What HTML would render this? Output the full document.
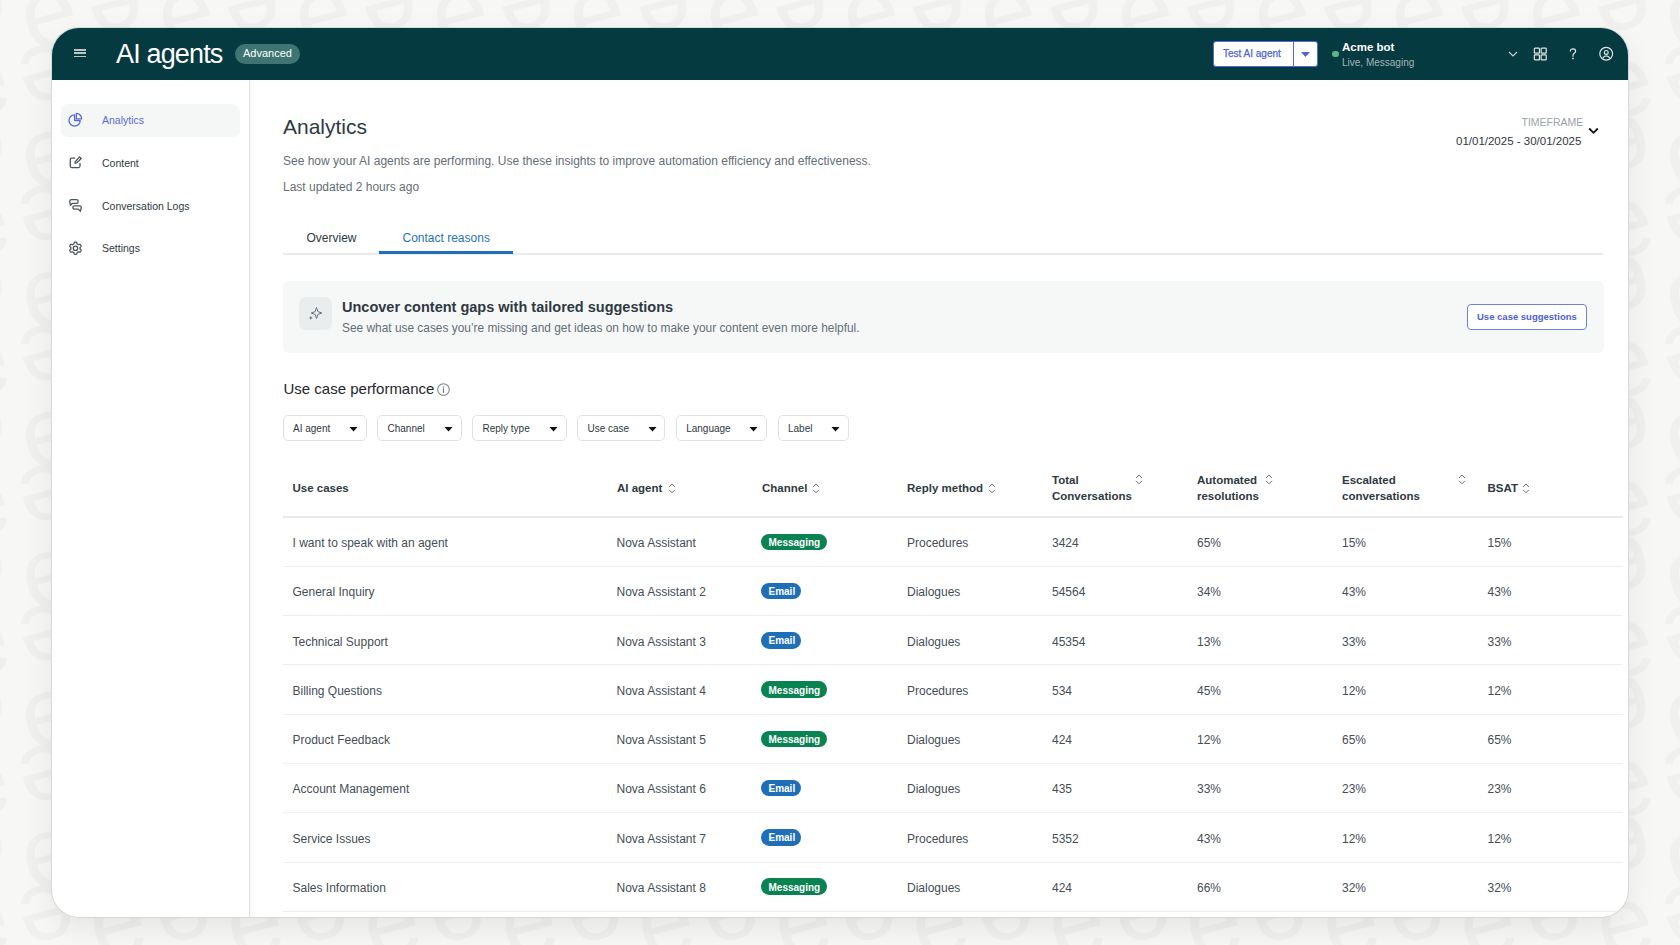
<!DOCTYPE html><html><head><meta charset="utf-8"><style>
*{margin:0;padding:0;box-sizing:border-box}
html,body{width:1680px;height:945px;overflow:hidden}
body{background:#f4f4f3;font-family:"Liberation Sans", sans-serif;position:relative}
.t{position:absolute;white-space:nowrap;line-height:1}
.abs{position:absolute}
#win{position:absolute;left:52px;top:28px;width:1576px;height:889px;border-radius:27px;background:#fff;overflow:hidden;box-shadow:0 0 0 1px #d8d8d8, 0 10px 30px rgba(0,0,0,0.08)}
</style></head><body>
<svg class="abs" style="left:0;top:0" width="1680" height="945">
<defs><pattern id="pe" patternUnits="userSpaceOnUse" x="288" y="-24" width="137" height="140"><g font-family="Liberation Sans" font-size="100" fill="#f0f0ef"><text x="34" y="35" text-anchor="middle" dominant-baseline="central" transform="rotate(-15 34 35)">e</text><text x="102.5" y="35" text-anchor="middle" dominant-baseline="central" transform="rotate(165 102.5 35)">e</text><text x="34" y="105" text-anchor="middle" dominant-baseline="central" transform="rotate(165 34 105)">e</text><text x="102.5" y="105" text-anchor="middle" dominant-baseline="central" transform="rotate(-15 102.5 105)">e</text></g></pattern><linearGradient id="sh" x1="0" y1="0" x2="0" y2="1"><stop offset="0" stop-color="#000" stop-opacity="0"/><stop offset="1" stop-color="#000" stop-opacity="0.035"/></linearGradient></defs>
<rect width="1680" height="945" fill="#f7f7f6"/>
<rect width="1680" height="945" fill="url(#pe)"/>
</svg><div id="win"><div class="abs" style="left:0;top:0;width:1576px;height:52px;background:#063a41"></div><div class="abs" style="left:22px;top:21.15px;width:12px;height:1.5px;background:#b9c6c6"></div><div class="abs" style="left:22px;top:24.450000000000003px;width:12px;height:1.5px;background:#b9c6c6"></div><div class="abs" style="left:22px;top:27.75px;width:12px;height:1.5px;background:#b9c6c6"></div><div class="t" style="left:64px;top:12.89px;font-size:27px;color:#fff;font-weight:400;letter-spacing:-0.85px">AI agents</div>
<div class="abs" style="left:183px;top:15.75px;width:65px;height:20px;border-radius:10px;background:#3e7572"></div><div class="t" style="left:191px;top:20.44px;font-size:11px;color:#fff;font-weight:400;">Advanced</div>
<div class="abs" style="left:1161px;top:13px;width:105px;height:25.5px;border-radius:3px;background:#fff;border:1px solid #5867d6"></div><div class="abs" style="left:1240.5px;top:13px;width:1px;height:25.5px;background:#5867d6"></div><div class="t" style="left:1171px;top:20.74px;font-size:10px;color:#5262d4;font-weight:400;-webkit-text-stroke:0.25px #5262d4">Test AI agent</div>
<svg class="abs" style="left:1249px;top:24px" width="9" height="5"><path d="M0 0H9L4.5 5Z" fill="#5262d4"/></svg><div class="abs" style="left:1280px;top:22.799999999999997px;width:6.5px;height:6.5px;border-radius:50%;background:#5db58a"></div><div class="t" style="left:1290px;top:14.27px;font-size:11.5px;color:#fff;font-weight:700;">Acme bot</div>
<div class="t" style="left:1290px;top:29.54px;font-size:10px;color:#a3b5b7;font-weight:400;">Live, Messaging</div>
<svg class="abs" style="left:1456px;top:22.5px" width="10" height="7"><path d="M1 1L5 5L9 1" stroke="#c5d0d0" stroke-width="1.1" fill="none"/></svg><svg class="abs" style="left:1481px;top:18.5px" width="15" height="15"><g stroke="#dfe6e6" stroke-width="1.2" fill="none"><rect x="1.35" y="1.1" width="5.1" height="5" rx="0.7"/><rect x="8.15" y="1.1" width="5.1" height="5" rx="0.7"/><rect x="1.35" y="7.9" width="5.1" height="5" rx="0.7"/><rect x="8.15" y="7.9" width="5.1" height="5" rx="0.7"/></g></svg><svg class="abs" style="left:1516px;top:19px" width="10" height="14"><path d="M2.4 4.1Q2.4 1.8 5 1.8Q7.6 1.8 7.6 4Q7.6 5.5 6.2 6.3Q5 7 5 8.5V9.2" stroke="#dfe6e6" stroke-width="1.2" fill="none" stroke-linecap="round"/><circle cx="5" cy="11.4" r="0.85" fill="#dfe6e6"/></svg><svg class="abs" style="left:1546px;top:18px" width="16" height="16"><g stroke="#dfe6e6" stroke-width="1.2" fill="none"><circle cx="8.2" cy="7.75" r="6.4"/><circle cx="8.25" cy="6.4" r="1.9"/><path d="M4.7 12.3Q5.9 9.8 8.25 9.8Q10.6 9.8 11.8 12.3"/></g></svg><div class="abs" style="left:197px;top:52px;width:1px;height:900px;background:#e2e5e7"></div><div class="abs" style="left:198px;top:52px;width:6px;height:900px;background:linear-gradient(90deg,#f7f8f8,#fff)"></div><div class="abs" style="left:9px;top:76px;width:179px;height:33px;border-radius:7px;background:#f5f7f7"></div><div class="t" style="left:50px;top:87.41px;font-size:10.5px;color:#5a6bd6;font-weight:400;">Analytics</div>
<div class="t" style="left:50px;top:129.91px;font-size:10.5px;color:#2f3941;font-weight:400;">Content</div>
<div class="t" style="left:50px;top:172.61px;font-size:10.5px;color:#2f3941;font-weight:400;">Conversation Logs</div>
<div class="t" style="left:50px;top:215.21px;font-size:10.5px;color:#2f3941;font-weight:400;">Settings</div>
<svg class="abs" style="left:10px;top:80px" width="28" height="24"><g stroke="#5a6bd6" stroke-width="1.3" fill="none" stroke-linejoin="round"><path d="M12.6 6.9A5.6 5.6 0 1 0 18.2 12.5H12.6Z"/><path d="M14.3 5.4V10.9H19.6A5.3 5.3 0 0 0 14.3 5.4Z"/></g></svg><svg class="abs" style="left:10px;top:122px" width="28" height="24"><g stroke="#49545c" stroke-width="1.3" fill="none" stroke-linejoin="round" stroke-linecap="round"><path d="M12.7 8.1H9.8A1.5 1.5 0 0 0 8.3 9.6V16.1A1.5 1.5 0 0 0 9.8 17.6H16.5A1.5 1.5 0 0 0 18 16.1V13.4"/><path d="M17.6 6.9L19.2 8.5L15.1 12.6Q14.5 13.2 13.7 13.2H13.1V12.6Q13.1 11.8 13.7 11.2Z"/></g></svg><svg class="abs" style="left:10px;top:165px" width="28" height="24"><g stroke="#49545c" stroke-width="1.3" fill="none" stroke-linejoin="round"><path d="M8.4 12.2L7.7 8.4Q7.7 6.6 9.5 6.6H14.5Q16.2 6.6 16.2 8.4Q16.2 10.3 14.5 10.3H10.4Z"/><path d="M18.4 18.2L19.3 14.5Q19.3 12.8 17.5 12.8H12.6Q10.8 12.8 10.8 14.4Q10.8 16.1 12.6 16.1H16.4Z"/></g></svg><svg class="abs" style="left:10px;top:208px" width="28" height="24"><g stroke="#49545c" stroke-width="1.3" fill="none" stroke-linejoin="round"><path d="M18.00 12.25 L18.00 12.01 L18.00 11.77 L18.04 11.52 L18.21 11.24 L18.62 10.87 L19.00 10.45 L19.10 10.08 L19.05 9.76 L18.93 9.46 L18.78 9.18 L18.60 8.90 L18.40 8.65 L18.16 8.44 L17.79 8.35 L17.23 8.47 L16.71 8.63 L16.37 8.64 L16.14 8.55 L15.93 8.43 L15.72 8.31 L15.52 8.19 L15.31 8.07 L15.11 7.91 L14.95 7.62 L14.83 7.08 L14.66 6.54 L14.40 6.27 L14.09 6.16 L13.77 6.11 L13.45 6.10 L13.13 6.11 L12.81 6.16 L12.50 6.27 L12.24 6.54 L12.07 7.08 L11.95 7.62 L11.79 7.91 L11.59 8.07 L11.38 8.19 L11.18 8.31 L10.97 8.43 L10.76 8.55 L10.53 8.64 L10.19 8.63 L9.67 8.47 L9.11 8.35 L8.74 8.44 L8.50 8.65 L8.30 8.90 L8.12 9.18 L7.97 9.46 L7.85 9.76 L7.80 10.08 L7.90 10.45 L8.28 10.87 L8.69 11.24 L8.86 11.52 L8.90 11.77 L8.90 12.01 L8.90 12.25 L8.90 12.49 L8.90 12.73 L8.86 12.98 L8.69 13.26 L8.28 13.63 L7.90 14.05 L7.80 14.42 L7.85 14.74 L7.97 15.04 L8.12 15.32 L8.30 15.60 L8.50 15.85 L8.74 16.06 L9.11 16.15 L9.67 16.03 L10.19 15.87 L10.53 15.86 L10.76 15.95 L10.97 16.07 L11.17 16.19 L11.38 16.31 L11.59 16.43 L11.79 16.59 L11.95 16.88 L12.07 17.42 L12.24 17.96 L12.50 18.23 L12.81 18.34 L13.13 18.39 L13.45 18.40 L13.77 18.39 L14.09 18.34 L14.40 18.23 L14.66 17.96 L14.83 17.42 L14.95 16.88 L15.11 16.59 L15.31 16.43 L15.52 16.31 L15.72 16.19 L15.93 16.07 L16.14 15.95 L16.37 15.86 L16.71 15.87 L17.23 16.03 L17.79 16.15 L18.16 16.06 L18.40 15.85 L18.60 15.60 L18.78 15.32 L18.93 15.04 L19.05 14.74 L19.10 14.42 L19.00 14.05 L18.62 13.63 L18.21 13.26 L18.04 12.98 L18.00 12.73 L18.00 12.49Z"/><circle cx="13.45" cy="12.25" r="2.2"/></g></svg><div class="t" style="left:231px;top:87.52px;font-size:21px;color:#2f3941;font-weight:400;">Analytics</div>
<div class="t" style="left:231px;top:126.84px;font-size:12px;color:#646e76;font-weight:400;">See how your AI agents are performing. Use these insights to improve automation efficiency and effectiveness.</div>
<div class="t" style="left:231px;top:153.09px;font-size:12px;color:#646e76;font-weight:400;">Last updated 2 hours ago</div>
<div class="t" style="left:1469.5px;top:88.61px;font-size:10.5px;color:#9aa2a8;font-weight:400;">TIMEFRAME</div>
<div class="t" style="left:1404px;top:108.37px;font-size:11.5px;color:#2f3941;font-weight:400;">01/01/2025 - 30/01/2025</div>
<svg class="abs" style="left:1536px;top:99px" width="11" height="8"><path d="M1.2 1.5L5.5 5.8L9.8 1.5" stroke="#111" stroke-width="1.8" fill="none"/></svg><div class="abs" style="left:231px;top:225px;width:1320px;height:2px;background:#e9ebed"></div><div class="abs" style="left:326.7px;top:222.8px;width:134px;height:2.8px;background:#1f6fb8"></div><div class="t" style="left:254.5px;top:203.84px;font-size:12px;color:#2f3941;font-weight:400;">Overview</div>
<div class="t" style="left:350.5px;top:203.84px;font-size:12px;color:#1f73b7;font-weight:400;">Contact reasons</div>
<div class="abs" style="left:230.5px;top:252.5px;width:1321px;height:72px;border-radius:6px;background:#f6f8f8"></div><div class="abs" style="left:247px;top:269.3px;width:33px;height:33px;border-radius:7px;background:#e9eded"></div><svg class="abs" style="left:254px;top:276px" width="19" height="19"><g stroke="#68737d" stroke-width="1" fill="none" stroke-linejoin="round"><path d="M10.5 3.5L11.9 7.6L15.8 9L11.9 10.4L10.5 14.5L9.1 10.4L5.2 9L9.1 7.6Z"/></g><path d="M4.8 11.8L5.4 13.3L6.9 13.9L5.4 14.5L4.8 16L4.2 14.5L2.7 13.9L4.2 13.3Z" fill="#68737d"/></svg><div class="t" style="left:290px;top:271.93px;font-size:14.5px;color:#2f3941;font-weight:700;">Uncover content gaps with tailored suggestions</div>
<div class="t" style="left:290px;top:294.63px;font-size:11.9px;color:#646e76;font-weight:400;">See what use cases you&#8217;re missing and get ideas on how to make your content even more helpful.</div>
<div class="abs" style="left:1414.5px;top:275.5px;width:120px;height:26.5px;border-radius:4px;background:#fff;border:1px solid #7080dc"></div><div class="t" style="left:1425px;top:284.16px;font-size:9.5px;color:#4f5fd0;font-weight:700;">Use case suggestions</div>
<div class="t" style="left:231.5px;top:353.05px;font-size:15px;color:#1f262b;font-weight:400;">Use case performance</div>
<svg class="abs" style="left:384.5px;top:354.8px" width="13" height="13"><circle cx="6.5" cy="6.5" r="5.8" stroke="#7b858d" stroke-width="1.1" fill="none"/><path d="M6.5 5.9V9.6" stroke="#68737d" stroke-width="1.1" stroke-linecap="round"/><circle cx="6.5" cy="3.9" r="0.75" fill="#68737d"/></svg><div class="abs" style="left:230.5px;top:387.2px;width:84.5px;height:26px;border-radius:5px;border:1px solid #dfe2e5;background:#fff"></div><div class="t" style="left:241.0px;top:395.64px;font-size:10px;color:#2f3941;font-weight:400;">AI agent</div>
<svg class="abs" style="left:297.2px;top:398.5px" width="9" height="5"><path d="M0.5 0H8.5L4.5 4.5Z" fill="#111"/></svg><div class="abs" style="left:325px;top:387.2px;width:84.6px;height:26px;border-radius:5px;border:1px solid #dfe2e5;background:#fff"></div><div class="t" style="left:335.5px;top:395.64px;font-size:10px;color:#2f3941;font-weight:400;">Channel</div>
<svg class="abs" style="left:391.8px;top:398.5px" width="9" height="5"><path d="M0.5 0H8.5L4.5 4.5Z" fill="#111"/></svg><div class="abs" style="left:420px;top:387.2px;width:95px;height:26px;border-radius:5px;border:1px solid #dfe2e5;background:#fff"></div><div class="t" style="left:430.5px;top:395.64px;font-size:10px;color:#2f3941;font-weight:400;">Reply type</div>
<svg class="abs" style="left:497.20000000000005px;top:398.5px" width="9" height="5"><path d="M0.5 0H8.5L4.5 4.5Z" fill="#111"/></svg><div class="abs" style="left:525px;top:387.2px;width:88.3px;height:26px;border-radius:5px;border:1px solid #dfe2e5;background:#fff"></div><div class="t" style="left:535.5px;top:395.64px;font-size:10px;color:#2f3941;font-weight:400;">Use case</div>
<svg class="abs" style="left:595.5px;top:398.5px" width="9" height="5"><path d="M0.5 0H8.5L4.5 4.5Z" fill="#111"/></svg><div class="abs" style="left:623.7px;top:387.2px;width:91.3px;height:26px;border-radius:5px;border:1px solid #dfe2e5;background:#fff"></div><div class="t" style="left:634.2px;top:395.64px;font-size:10px;color:#2f3941;font-weight:400;">Language</div>
<svg class="abs" style="left:697.2px;top:398.5px" width="9" height="5"><path d="M0.5 0H8.5L4.5 4.5Z" fill="#111"/></svg><div class="abs" style="left:725.5px;top:387.2px;width:71.1px;height:26px;border-radius:5px;border:1px solid #dfe2e5;background:#fff"></div><div class="t" style="left:736.0px;top:395.64px;font-size:10px;color:#2f3941;font-weight:400;">Label</div>
<svg class="abs" style="left:778.8000000000001px;top:398.5px" width="9" height="5"><path d="M0.5 0H8.5L4.5 4.5Z" fill="#111"/></svg><div class="abs" style="left:231px;top:488px;width:1340px;height:2px;background:#e8eaec"></div><div class="t" style="left:240.5px;top:454.87px;font-size:11.5px;color:#2f3941;font-weight:700;">Use cases</div>
<div class="t" style="left:565px;top:454.87px;font-size:11.5px;color:#2f3941;font-weight:700;">AI agent</div>
<svg class="abs" style="left:615.5px;top:454.5px" width="8" height="11"><g stroke="#68737d" stroke-width="1" fill="none"><path d="M1 4L4 1L7 4"/><path d="M1 6.8L4 9.8L7 6.8"/></g></svg><div class="t" style="left:710px;top:454.87px;font-size:11.5px;color:#2f3941;font-weight:700;">Channel</div>
<svg class="abs" style="left:760px;top:454.5px" width="8" height="11"><g stroke="#68737d" stroke-width="1" fill="none"><path d="M1 4L4 1L7 4"/><path d="M1 6.8L4 9.8L7 6.8"/></g></svg><div class="t" style="left:855px;top:454.87px;font-size:11.5px;color:#2f3941;font-weight:700;">Reply method</div>
<svg class="abs" style="left:936px;top:454.5px" width="8" height="11"><g stroke="#68737d" stroke-width="1" fill="none"><path d="M1 4L4 1L7 4"/><path d="M1 6.8L4 9.8L7 6.8"/></g></svg><div class="t" style="left:1000px;top:446.67px;font-size:11.5px;color:#2f3941;font-weight:700;">Total</div>
<div class="t" style="left:1000px;top:463.07px;font-size:11.5px;color:#2f3941;font-weight:700;">Conversations</div>
<svg class="abs" style="left:1083px;top:446px" width="8" height="11"><g stroke="#68737d" stroke-width="1" fill="none"><path d="M1 4L4 1L7 4"/><path d="M1 6.8L4 9.8L7 6.8"/></g></svg><div class="t" style="left:1145px;top:446.67px;font-size:11.5px;color:#2f3941;font-weight:700;">Automated</div>
<div class="t" style="left:1145px;top:463.07px;font-size:11.5px;color:#2f3941;font-weight:700;">resolutions</div>
<svg class="abs" style="left:1213px;top:446px" width="8" height="11"><g stroke="#68737d" stroke-width="1" fill="none"><path d="M1 4L4 1L7 4"/><path d="M1 6.8L4 9.8L7 6.8"/></g></svg><div class="t" style="left:1290px;top:446.67px;font-size:11.5px;color:#2f3941;font-weight:700;">Escalated</div>
<div class="t" style="left:1290px;top:463.07px;font-size:11.5px;color:#2f3941;font-weight:700;">conversations</div>
<svg class="abs" style="left:1406px;top:446px" width="8" height="11"><g stroke="#68737d" stroke-width="1" fill="none"><path d="M1 4L4 1L7 4"/><path d="M1 6.8L4 9.8L7 6.8"/></g></svg><div class="t" style="left:1435.5px;top:454.87px;font-size:11.5px;color:#2f3941;font-weight:700;">BSAT</div>
<svg class="abs" style="left:1469.5px;top:454.5px" width="8" height="11"><g stroke="#68737d" stroke-width="1" fill="none"><path d="M1 4L4 1L7 4"/><path d="M1 6.8L4 9.8L7 6.8"/></g></svg><div class="abs" style="left:231px;top:537.9px;width:1340px;height:1px;background:#eceef0"></div><div class="t" style="left:240.5px;top:509.04px;font-size:12px;color:#454e56;font-weight:400;">I want to speak with an agent</div>
<div class="t" style="left:564.5px;top:509.04px;font-size:12px;color:#454e56;font-weight:400;">Nova Assistant</div>
<div class="abs" style="left:709.3px;top:505.6px;width:66.2px;height:16.5px;border-radius:8.25px;background:#0a8352"></div><div class="t" style="left:716.5px;top:509.73px;font-size:10px;color:#fff;font-weight:700;">Messaging</div>
<div class="t" style="left:855px;top:509.04px;font-size:12px;color:#454e56;font-weight:400;">Procedures</div>
<div class="t" style="left:1000px;top:509.04px;font-size:12px;color:#454e56;font-weight:400;">3424</div>
<div class="t" style="left:1145px;top:509.04px;font-size:12px;color:#454e56;font-weight:400;">65%</div>
<div class="t" style="left:1290px;top:509.04px;font-size:12px;color:#454e56;font-weight:400;">15%</div>
<div class="t" style="left:1435.5px;top:509.04px;font-size:12px;color:#454e56;font-weight:400;">15%</div>
<div class="abs" style="left:231px;top:587.17px;width:1340px;height:1px;background:#eceef0"></div><div class="t" style="left:240.5px;top:558.31px;font-size:12px;color:#454e56;font-weight:400;">General Inquiry</div>
<div class="t" style="left:564.5px;top:558.31px;font-size:12px;color:#454e56;font-weight:400;">Nova Assistant 2</div>
<div class="abs" style="left:709.3px;top:554.87px;width:39.6px;height:16.5px;border-radius:8.25px;background:#1f6fb8"></div><div class="t" style="left:716.5px;top:559.00px;font-size:10px;color:#fff;font-weight:700;">Email</div>
<div class="t" style="left:855px;top:558.31px;font-size:12px;color:#454e56;font-weight:400;">Dialogues</div>
<div class="t" style="left:1000px;top:558.31px;font-size:12px;color:#454e56;font-weight:400;">54564</div>
<div class="t" style="left:1145px;top:558.31px;font-size:12px;color:#454e56;font-weight:400;">34%</div>
<div class="t" style="left:1290px;top:558.31px;font-size:12px;color:#454e56;font-weight:400;">43%</div>
<div class="t" style="left:1435.5px;top:558.31px;font-size:12px;color:#454e56;font-weight:400;">43%</div>
<div class="abs" style="left:231px;top:636.4399999999999px;width:1340px;height:1px;background:#eceef0"></div><div class="t" style="left:240.5px;top:607.58px;font-size:12px;color:#454e56;font-weight:400;">Technical Support</div>
<div class="t" style="left:564.5px;top:607.58px;font-size:12px;color:#454e56;font-weight:400;">Nova Assistant 3</div>
<div class="abs" style="left:709.3px;top:604.14px;width:39.6px;height:16.5px;border-radius:8.25px;background:#1f6fb8"></div><div class="t" style="left:716.5px;top:608.27px;font-size:10px;color:#fff;font-weight:700;">Email</div>
<div class="t" style="left:855px;top:607.58px;font-size:12px;color:#454e56;font-weight:400;">Dialogues</div>
<div class="t" style="left:1000px;top:607.58px;font-size:12px;color:#454e56;font-weight:400;">45354</div>
<div class="t" style="left:1145px;top:607.58px;font-size:12px;color:#454e56;font-weight:400;">13%</div>
<div class="t" style="left:1290px;top:607.58px;font-size:12px;color:#454e56;font-weight:400;">33%</div>
<div class="t" style="left:1435.5px;top:607.58px;font-size:12px;color:#454e56;font-weight:400;">33%</div>
<div class="abs" style="left:231px;top:685.71px;width:1340px;height:1px;background:#eceef0"></div><div class="t" style="left:240.5px;top:656.85px;font-size:12px;color:#454e56;font-weight:400;">Billing Questions</div>
<div class="t" style="left:564.5px;top:656.85px;font-size:12px;color:#454e56;font-weight:400;">Nova Assistant 4</div>
<div class="abs" style="left:709.3px;top:653.4100000000001px;width:66.2px;height:16.5px;border-radius:8.25px;background:#0a8352"></div><div class="t" style="left:716.5px;top:657.54px;font-size:10px;color:#fff;font-weight:700;">Messaging</div>
<div class="t" style="left:855px;top:656.85px;font-size:12px;color:#454e56;font-weight:400;">Procedures</div>
<div class="t" style="left:1000px;top:656.85px;font-size:12px;color:#454e56;font-weight:400;">534</div>
<div class="t" style="left:1145px;top:656.85px;font-size:12px;color:#454e56;font-weight:400;">45%</div>
<div class="t" style="left:1290px;top:656.85px;font-size:12px;color:#454e56;font-weight:400;">12%</div>
<div class="t" style="left:1435.5px;top:656.85px;font-size:12px;color:#454e56;font-weight:400;">12%</div>
<div class="abs" style="left:231px;top:734.98px;width:1340px;height:1px;background:#eceef0"></div><div class="t" style="left:240.5px;top:706.12px;font-size:12px;color:#454e56;font-weight:400;">Product Feedback</div>
<div class="t" style="left:564.5px;top:706.12px;font-size:12px;color:#454e56;font-weight:400;">Nova Assistant 5</div>
<div class="abs" style="left:709.3px;top:702.6800000000001px;width:66.2px;height:16.5px;border-radius:8.25px;background:#0a8352"></div><div class="t" style="left:716.5px;top:706.81px;font-size:10px;color:#fff;font-weight:700;">Messaging</div>
<div class="t" style="left:855px;top:706.12px;font-size:12px;color:#454e56;font-weight:400;">Dialogues</div>
<div class="t" style="left:1000px;top:706.12px;font-size:12px;color:#454e56;font-weight:400;">424</div>
<div class="t" style="left:1145px;top:706.12px;font-size:12px;color:#454e56;font-weight:400;">12%</div>
<div class="t" style="left:1290px;top:706.12px;font-size:12px;color:#454e56;font-weight:400;">65%</div>
<div class="t" style="left:1435.5px;top:706.12px;font-size:12px;color:#454e56;font-weight:400;">65%</div>
<div class="abs" style="left:231px;top:784.25px;width:1340px;height:1px;background:#eceef0"></div><div class="t" style="left:240.5px;top:755.39px;font-size:12px;color:#454e56;font-weight:400;">Account Management</div>
<div class="t" style="left:564.5px;top:755.39px;font-size:12px;color:#454e56;font-weight:400;">Nova Assistant 6</div>
<div class="abs" style="left:709.3px;top:751.95px;width:39.6px;height:16.5px;border-radius:8.25px;background:#1f6fb8"></div><div class="t" style="left:716.5px;top:756.08px;font-size:10px;color:#fff;font-weight:700;">Email</div>
<div class="t" style="left:855px;top:755.39px;font-size:12px;color:#454e56;font-weight:400;">Dialogues</div>
<div class="t" style="left:1000px;top:755.39px;font-size:12px;color:#454e56;font-weight:400;">435</div>
<div class="t" style="left:1145px;top:755.39px;font-size:12px;color:#454e56;font-weight:400;">33%</div>
<div class="t" style="left:1290px;top:755.39px;font-size:12px;color:#454e56;font-weight:400;">23%</div>
<div class="t" style="left:1435.5px;top:755.39px;font-size:12px;color:#454e56;font-weight:400;">23%</div>
<div class="abs" style="left:231px;top:833.52px;width:1340px;height:1px;background:#eceef0"></div><div class="t" style="left:240.5px;top:804.66px;font-size:12px;color:#454e56;font-weight:400;">Service Issues</div>
<div class="t" style="left:564.5px;top:804.66px;font-size:12px;color:#454e56;font-weight:400;">Nova Assistant 7</div>
<div class="abs" style="left:709.3px;top:801.22px;width:39.6px;height:16.5px;border-radius:8.25px;background:#1f6fb8"></div><div class="t" style="left:716.5px;top:805.35px;font-size:10px;color:#fff;font-weight:700;">Email</div>
<div class="t" style="left:855px;top:804.66px;font-size:12px;color:#454e56;font-weight:400;">Procedures</div>
<div class="t" style="left:1000px;top:804.66px;font-size:12px;color:#454e56;font-weight:400;">5352</div>
<div class="t" style="left:1145px;top:804.66px;font-size:12px;color:#454e56;font-weight:400;">43%</div>
<div class="t" style="left:1290px;top:804.66px;font-size:12px;color:#454e56;font-weight:400;">12%</div>
<div class="t" style="left:1435.5px;top:804.66px;font-size:12px;color:#454e56;font-weight:400;">12%</div>
<div class="abs" style="left:231px;top:882.79px;width:1340px;height:1px;background:#eceef0"></div><div class="t" style="left:240.5px;top:853.93px;font-size:12px;color:#454e56;font-weight:400;">Sales Information</div>
<div class="t" style="left:564.5px;top:853.93px;font-size:12px;color:#454e56;font-weight:400;">Nova Assistant 8</div>
<div class="abs" style="left:709.3px;top:850.49px;width:66.2px;height:16.5px;border-radius:8.25px;background:#0a8352"></div><div class="t" style="left:716.5px;top:854.62px;font-size:10px;color:#fff;font-weight:700;">Messaging</div>
<div class="t" style="left:855px;top:853.93px;font-size:12px;color:#454e56;font-weight:400;">Dialogues</div>
<div class="t" style="left:1000px;top:853.93px;font-size:12px;color:#454e56;font-weight:400;">424</div>
<div class="t" style="left:1145px;top:853.93px;font-size:12px;color:#454e56;font-weight:400;">66%</div>
<div class="t" style="left:1290px;top:853.93px;font-size:12px;color:#454e56;font-weight:400;">32%</div>
<div class="t" style="left:1435.5px;top:853.93px;font-size:12px;color:#454e56;font-weight:400;">32%</div>
</div>
</body></html>
